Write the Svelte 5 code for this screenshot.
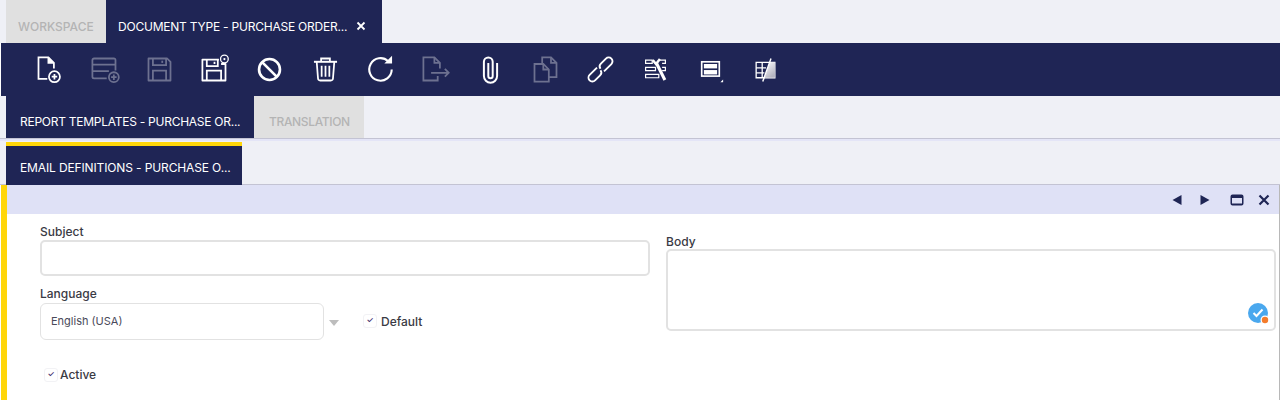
<script>
	const toolbar = [
		{ name: 'new', off: false },
		{ name: 'newcard', off: true },
		{ name: 'save', off: true },
		{ name: 'savecreate', off: false },
		{ name: 'cancel', off: false },
		{ name: 'trash', off: false },
		{ name: 'refresh', off: false },
		{ name: 'export', off: true },
		{ name: 'clip', off: false },
		{ name: 'copy', off: true },
		{ name: 'link', off: false },
		{ name: 'tools', off: false },
		{ name: 'layout', off: false },
		{ name: 'edit', off: false }
	];
</script>

<div class="page">
	<div class="tabs top">
		<div class="tab idle workspace">WORKSPACE</div>
		<div class="tab active doc">
			<span>DOCUMENT TYPE - PURCHASE ORDER...</span>
			<svg class="close" width="10" height="10" viewBox="0 0 10 10"><path d="M1.500 1.500l7 7M8.500 1.500l-7 7" stroke="#fff" stroke-width="1.800" /></svg>
		</div>
	</div>

	<div class="toolbar">
		{#each toolbar as item}
			<div class="tool" class:off={item.off}>
				<svg width="33" height="33" viewBox="0 0 30 30" fill="none" stroke="#fff" stroke-width="1.600">
					{#if item.name === 'new'}
						<path d="M13 23.500H5V4h9l5 5v5" /><path d="M14 4v5h5" fill="#fff" />
						<circle cx="19.500" cy="21.500" r="5" /><path d="M17 21.500h5M19.500 19v5" />
					{:else if item.name === 'newcard'}
						<path d="M17 23H5.500A1.500 1.500 0 0 1 4 21.500v-15A1.500 1.500 0 0 1 5.500 5h18A1.500 1.500 0 0 1 25 6.500V16" />
						<path d="M4 10.500h21M4 16.500h15" />
						<circle cx="23.500" cy="22" r="4.500" /><path d="M21 22h5M23.500 19.500v5" />
					{:else if item.name === 'save'}
						<path d="M5 5h17l3 3v17H5z" stroke-linejoin="round" /><path d="M9 5v6h12V5M9 25v-9h12v9" /><path d="M17.500 7v2" />
					{:else if item.name === 'savecreate'}
						<path d="M21 10h4v15H4V6h15" stroke-linejoin="round" /><path d="M8 6v6h10V6M8 25v-9h13v9" /><path d="M15 8v2" />
						<circle cx="24" cy="5.500" r="3.500" stroke-width="1.200" /><circle cx="24" cy="5.500" r="1" fill="#fff" stroke="none" />
					{:else if item.name === 'cancel'}
						<circle cx="15" cy="15" r="9.500" stroke-width="2.400" /><path d="M8.500 8.500l13 13" stroke-width="2.400" />
					{:else if item.name === 'trash'}
						<path d="M4.500 8h21" stroke-width="1.800" /><path d="M11 8V5h8v3" />
						<path d="M7 8l1.200 15.200a2 2 0 0 0 2 1.800h9.600a2 2 0 0 0 2-1.800L23 8" /><path d="M11.500 11.500v10M15 11.500v10M18.500 11.500v10" />
					{:else if item.name === 'refresh'}
						<path d="M22 7.500A10.200 10.200 0 1 0 25.200 15" stroke-width="1.900" /><path d="M18.500 9.500h7v-7z" fill="#fff" stroke="none" />
					{:else if item.name === 'export'}
						<path d="M17 21v4H4V4h10l5 5v5" /><path d="M14 4v5h5M11 18h16M23.500 14.500L27 18l-3.500 3.500" />
					{:else if item.name === 'clip'}
						<path d="M21 9v12a6 6 0 0 1-12 0V8a4 4 0 0 1 8 0v13a2 2 0 0 1-4 0V9" stroke-width="1.800" />
					{:else if item.name === 'copy'}
						<path d="M12 9V4h8l5 5v13h-7" /><path d="M20 4v5h5" /><path d="M5 10h8l5 5v11H5z" /><path d="M13 10v5h5" />
					{:else if item.name === 'link'}
						<g transform="rotate(-45 15 15)" stroke-width="1.700">
							<path d="M14 11.500H4.500a3.500 3.500 0 0 0 0 7H11a3.500 3.500 0 0 0 3.500-3" />
							<path d="M16 18.500h9.500a3.500 3.500 0 0 0 0-7H19a3.500 3.500 0 0 0-3.500 3" />
						</g>
					{:else if item.name === 'tools'}
						<path d="M6 6.500h6v3H6zM18 6.500h6v3h-3M6 13h9v3H6zM21 13h3v3h-3M6 19.500h12v3H6z" stroke-width="1.100" />
						<path d="M12.500 6.500l3 3.500 3.500-4.500" stroke-width="2.200" />
						<path d="M16 9.500l7.500 15" stroke-width="2.800" />
					{:else if item.name === 'layout'}
						<rect x="7" y="8" width="16" height="13" stroke-width="1.500" />
						<rect x="9" y="10" width="12" height="4" fill="#fff" stroke="none" />
						<rect x="9" y="15.500" width="12" height="4" fill="#fff" stroke="none" />
						<path d="M26.500 26.500h-2.500l2.500-2.500z" fill="#fff" stroke="none" />
					{:else}
						<defs>
							<linearGradient id="fade" x1="0" y1="0" x2="0.6" y2="1">
								<stop offset="0" stop-color="#fff" />
								<stop offset="1" stop-color="#b4b4c0" />
							</linearGradient>
						</defs>
						<path d="M6.500 8.500h17v14h-17zM6.500 13.500h9M6.500 18h7.500M12 8.500v14" stroke-width="1.200" />
						<path d="M14 22.500l5-14h4.500v14z" fill="url(#fade)" stroke="none" />
						<path d="M12.500 26l7.500-21" stroke-width="1.300" />
					{/if}
				</svg>
			</div>
		{/each}
	</div>

	<div class="tabs sub">
		<div class="tab active report">REPORT TEMPLATES - PURCHASE OR...</div>
		<div class="tab idle trans">TRANSLATION</div>
	</div>

	<div class="tabs detail">
		<div class="tab active email">EMAIL DEFINITIONS - PURCHASE O...</div>
	</div>

	<div class="panel">
		<div class="panelbar">
			<svg width="12" height="12" viewBox="0 0 12 12"><path d="M10.500 1v10L1.500 6z" fill="#1f2555" /></svg>
			<svg class="next" width="12" height="12" viewBox="0 0 12 12"><path d="M1.500 1v10l9-5z" fill="#1f2555" /></svg>
			<svg width="14" height="12" viewBox="0 0 14 12" class="max"><path d="M2.500 .5h9a2 2 0 0 1 2 2v7a2 2 0 0 1-2 2h-9a2 2 0 0 1-2-2v-7a2 2 0 0 1 2-2z" fill="#1f2555" /><rect x="2" y="4" width="10" height="5.500" fill="#dfe1f6" /></svg>
			<svg width="12" height="12" viewBox="0 0 12 12" class="x"><path d="M1.500 1.500l9 9M10.500 1.500l-9 9" stroke="#1f2555" stroke-width="2.200" /></svg>
		</div>

		<div class="form">
			<div class="col left">
				<label class="lbl" for="subject">Subject</label>
				<input id="subject" class="field subject" />
				<label class="lbl lang" for="language">Language</label>
				<div class="langrow">
					<div id="language" class="field select">English (USA)</div>
					<span class="arrow"></span>
					<div class="check default"><span class="box">✓</span>Default</div>
				</div>
				<div class="check active-row"><span class="box">✓</span>Active</div>
			</div>
			<div class="col right">
				<label class="lbl" for="body">Body</label>
				<div id="body" class="field area">
					<span class="badge">
						<svg width="24" height="24" viewBox="0 0 24 24">
							<circle cx="10" cy="10" r="10" fill="#4aa8ee" />
							<path d="M5.500 10l3 3 6-6.500" fill="none" stroke="#fff" stroke-width="2" />
							<circle cx="17" cy="17" r="4.500" fill="#fff" />
							<circle cx="17" cy="17" r="3.200" fill="#f47c2c" />
						</svg>
					</span>
				</div>
			</div>
		</div>
	</div>
</div>

<style>
	:global(body) {
		margin: 0;
		background: #fff;
	}
	.page {
		height: 400px;
		overflow: hidden;
		font-family: Inter, 'Open Sans', sans-serif;
		display: flex;
		flex-direction: column;
	}
	.tabs {
		display: flex;
		background: #eff0f6;
		padding-left: 6px;
		flex: none;
	}
	.top {
		height: 43px;
	}
	.sub {
		height: 42px;
		border-bottom: 1px solid #c3c3d3;
	}
	.detail {
		height: 46px;
		padding-top: 1px;
		box-sizing: border-box;
		border-top: 2px solid #e4e5f7;
		border-bottom: 1px solid #c3c3d3;
	}
	.tab {
		display: flex;
		align-items: center;
		font-size: 12px;
		box-sizing: border-box;
		white-space: nowrap;
	}
	.tab.idle {
		background: #e0e0e0;
		color: #b4b4b4;
		font-weight: 500;
	}
	.tab.active {
		background: #1f2555;
		color: #fff;
		font-weight: 400;
	}
	.workspace {
		width: 100px;
		padding-left: 12px;
		padding-top: 9px;
	}
	.doc {
		width: 276px;
		padding-left: 12px;
		padding-top: 9px;
		gap: 9px;
		letter-spacing: -0.22px;
	}
	.report {
		width: 248px;
		padding-left: 14px;
		padding-top: 9px;
		letter-spacing: -0.26px;
	}
	.trans {
		width: 110px;
		padding-left: 15px;
		padding-top: 9px;
		letter-spacing: -0.35px;
	}
	.email {
		width: 236px;
		padding-left: 14px;
		padding-top: 4px;
		border-top: 4px solid #ffd60a;
		margin-bottom: -1px;
		letter-spacing: -0.13px;
	}
	.toolbar {
		height: 53px;
		flex: none;
		background: #1f2555;
		display: flex;
		align-items: center;
		padding-left: 21px;
		margin-left: 1px;
	}
	.tool {
		width: 55.1px;
		display: flex;
		justify-content: center;
	}
	.tool.off {
		opacity: 0.35;
	}
	.panel {
		flex: 1;
		border-left: 6px solid #ffd60a;
		border-right: 1px solid #b8b8b8;
		margin-left: 1px;
		background: #fff;
	}
	.panelbar {
		height: 29px;
		background: #dfe1f6;
		display: flex;
		align-items: center;
		justify-content: flex-end;
		gap: 15px;
		padding-right: 9px;
	}
	.panelbar .next {
		margin-left: 1px;
	}
	.panelbar .max {
		margin-left: 4px;
	}
	.panelbar .x {
		margin-left: -1px;
	}
	.form {
		display: grid;
		grid-template-columns: 610px 610px;
		gap: 16px;
		padding-left: 33px;
	}
	.lbl {
		display: block;
		font-size: 12px;
		font-weight: 500;
		color: #3a3a44;
		line-height: 16px;
	}
	.left {
		padding-top: 10px;
	}
	.right {
		padding-top: 20px;
	}
	.right .lbl {
		margin-bottom: -1px;
	}
	.field {
		display: block;
		box-sizing: border-box;
		border: 2px solid #e2e2e2;
		border-radius: 5px;
		background: #fff;
		width: 100%;
		outline: none;
	}
	.subject {
		height: 36px;
	}
	.lang {
		margin-top: 10px;
	}
	.langrow {
		display: flex;
		align-items: center;
		margin-top: 1px;
	}
	.select {
		width: 284px;
		height: 37px;
		border-width: 1px;
		border-radius: 6px;
		font-size: 11px;
		color: #4a4a5a;
		line-height: 35px;
		padding-left: 10px;
		flex: none;
	}
	.arrow {
		width: 0;
		height: 0;
		border-left: 5px solid transparent;
		border-right: 5px solid transparent;
		border-top: 6px solid #bdbdbd;
		margin-left: 5px;
		margin-top: 2px;
	}
	.check {
		display: flex;
		align-items: center;
		font-size: 12px;
		font-weight: 500;
		color: #3a3a44;
		gap: 4px;
	}
	.default {
		margin-left: 24px;
		margin-top: -1px;
	}
	.active-row {
		margin-top: 27px;
		margin-left: 4px;
		gap: 2px;
	}
	.box {
		width: 12px;
		height: 12px;
		border: 1px solid #f2f2f5;
		border-radius: 3px;
		font-size: 8px;
		line-height: 11px;
		text-align: center;
		color: #3c2a6a;
	}
	.area {
		height: 82px;
		position: relative;
	}
	.badge {
		position: absolute;
		right: 2px;
		bottom: 2px;
		height: 24px;
	}
</style>
